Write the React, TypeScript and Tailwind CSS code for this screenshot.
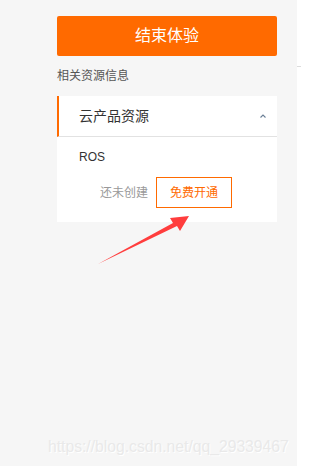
import React from "react";

export default function App() {
  return (
    <div
      className="relative flex h-[466px] w-[301px] overflow-hidden bg-white"
      style={{ fontFamily: '"Liberation Sans", Arial, "Noto Sans CJK SC", sans-serif' }}
    >
      <div className="h-full w-[297px] bg-[#f6f6f6] pl-[57px] pt-[16px]">
        <div className="w-[220px]">
          <div className="flex h-[40px] items-center justify-center rounded-[2px] bg-[#ff6a00] text-[16px] text-white">
            结束体验
          </div>
          <div className="mt-[12px] text-[12px] leading-[16px] text-[#555]">相关资源信息</div>
          <div className="mt-[12px] bg-white">
            <div className="flex h-[41px] items-center justify-between border-b border-l-2 border-b-[#e2e2e2] border-l-[#ff6a00] pl-[20px] pr-[10px]">
              <span className="text-[14px] text-[#333]">云产品资源</span>
              <svg width="8" height="6" viewBox="0 0 8 6" className="mb-[1px]">
                <path d="M1.5 4.5 L4 2 L6.5 4.5" fill="none" stroke="#6b7f96" strokeWidth="1.1" />
              </svg>
            </div>
            <div className="pb-[14px] pl-[22px] pt-[12px]">
              <div className="text-[12px] leading-[16px] text-[#333]">ROS</div>
              <div className="mt-[12px] flex items-center pl-[21px]">
                <span className="text-[12px] text-[#999]">还未创建</span>
                <div className="ml-[8px] flex h-[31px] w-[76px] items-center justify-center border border-[#ff6a00] text-[12px] text-[#ff6a00]">
                  免费开通
                </div>
              </div>
            </div>
          </div>
        </div>
      </div>
      <div className="relative flex-1 bg-white">
        <div className="absolute left-0 right-0 top-[66px] h-px bg-[#dcdcdc]" />
      </div>
      <svg className="pointer-events-none absolute left-0 top-0" width="301" height="466">
        <polygon points="98,264 173,223 170,218 189,216 180,231 177,226" fill="#ff3d3d" />
      </svg>
      <div className="pointer-events-none absolute left-[48px] top-[437px] text-[15.7px] leading-[20px] text-[#e9e9e9] [text-shadow:1px_1px_0_#ffffff]">
        https://blog.csdn.net/qq_29339467
      </div>
    </div>
  );
}
